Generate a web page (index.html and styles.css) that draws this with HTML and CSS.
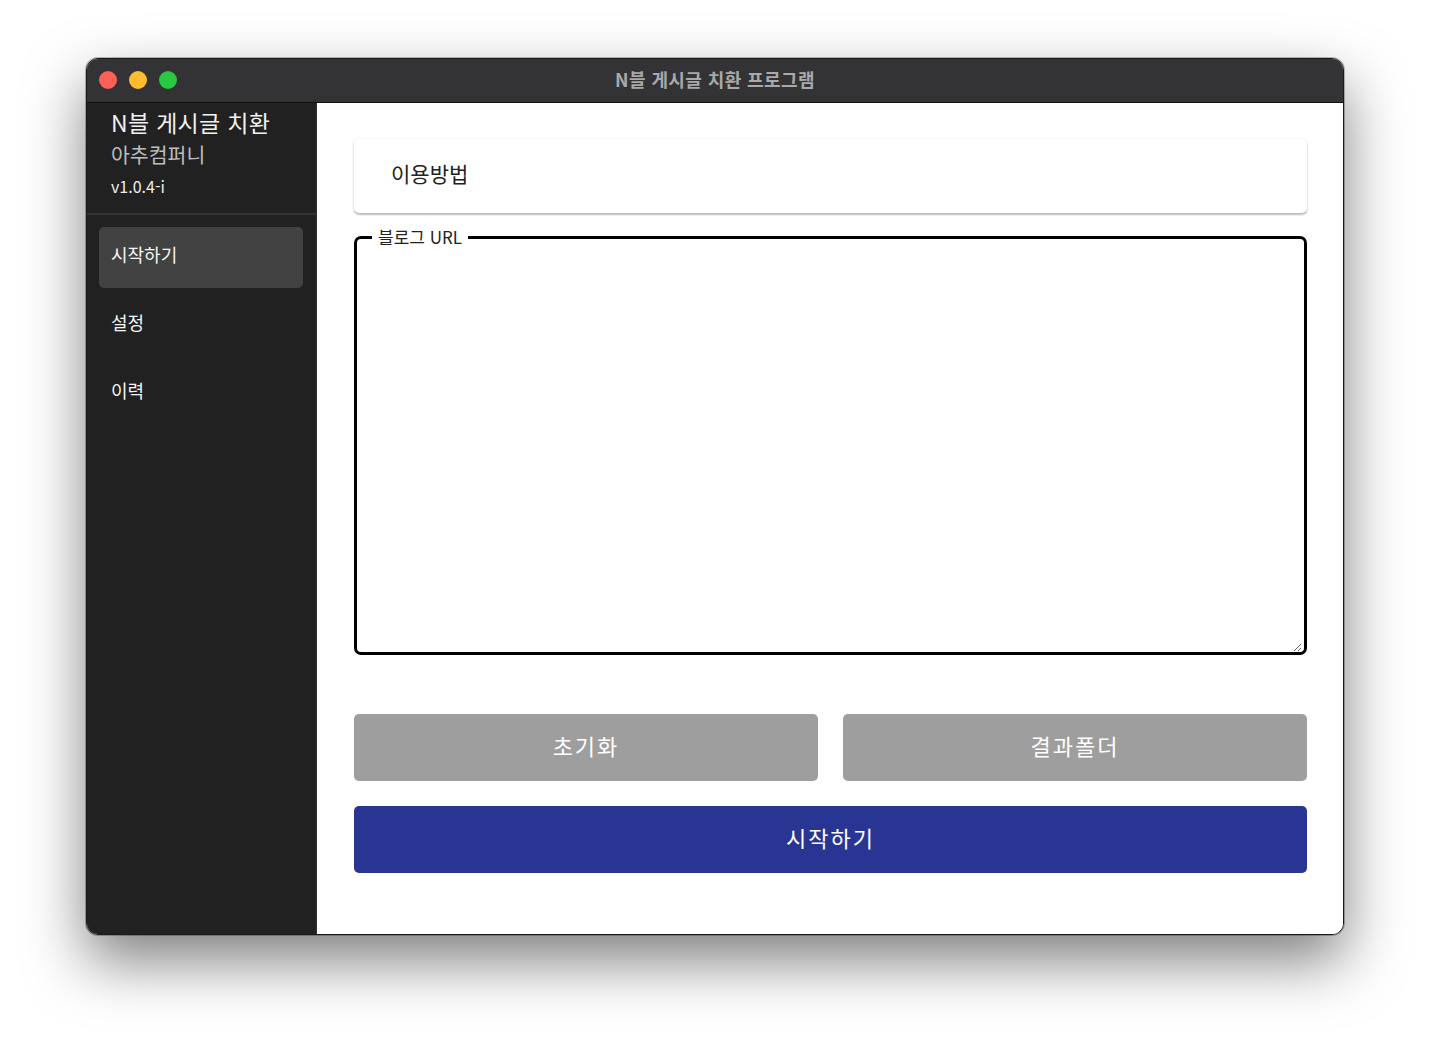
FILE: index.html
```html
<!DOCTYPE html>
<html lang="ko">
<head>
<meta charset="utf-8">
<title>N블 게시글 치환 프로그램</title>
<link rel="stylesheet" href="styles.css">
</head>
<body>
<div class="window">
  <div class="titlebar">
    <div class="lights">
      <span class="light red"></span>
      <span class="light yellow"></span>
      <span class="light green"></span>
    </div>
    <div class="title">N블 게시글 치환 프로그램</div>
  </div>
  <div class="body">
    <aside class="sidebar">
      <div class="brand">
        <div class="brand-title">N블 게시글 치환</div>
        <div class="brand-company">아추컴퍼니</div>
        <div class="brand-version">v1.0.4-i</div>
      </div>
      <nav class="nav">
        <div class="nav-item active">시작하기</div>
        <div class="nav-item">설정</div>
        <div class="nav-item">이력</div>
      </nav>
    </aside>
    <main class="main">
      <div class="card">이용방법</div>
      <fieldset class="url-field">
        <legend>블로그 URL</legend>
        <textarea class="url-input"></textarea>
      </fieldset>
      <div class="btn-row">
        <button class="btn gray">초기화</button>
        <button class="btn gray">결과폴더</button>
      </div>
      <button class="btn primary">시작하기</button>
    </main>
  </div>
</div>
</body>
</html>
```

FILE: styles.css
```css
* { box-sizing: border-box; }
html, body {
  margin: 0;
  padding: 0;
  background: #ffffff;
}
body {
  min-height: 100vh;
  padding: 58px 0 0 86px;
  font-family: "Noto Sans CJK KR", "Noto Sans", sans-serif;
}
.window {
  width: 1258px;
  height: 877px;
  border-radius: 12px;
  overflow: hidden;
  display: flex;
  flex-direction: column;
  border: 1px solid #1a1a1a;
  box-shadow: 0 26px 60px rgba(0,0,0,0.5), 0 0 0 1px rgba(0,0,0,0.25);
  background: #fff;
}
.titlebar {
  height: 44px;
  flex: none;
  background: #333335;
  border-bottom: 1px solid #111;
  display: flex;
  align-items: center;
  position: relative;
}
.lights {
  display: flex;
  gap: 12px;
  padding-left: 12px;
  margin-top: -2px;
}
.light {
  width: 18px;
  height: 18px;
  border-radius: 50%;
  display: block;
}
.red { background: #fe5f57; }
.yellow { background: #febc2e; }
.green { background: #28c840; }
.title {
  position: absolute;
  left: 0;
  right: 0;
  top: 0;
  bottom: 4px;
  display: flex;
  align-items: center;
  justify-content: center;
  color: #a9a9ab;
  font-weight: 700;
  font-size: 18px;
  letter-spacing: 0.4px;
  pointer-events: none;
}
.body {
  flex: 1;
  display: flex;
  min-height: 0;
}
.sidebar {
  width: 230px;
  flex: none;
  background: #212121;
  border-right: 1px solid #333;
  display: flex;
  flex-direction: column;
}
.brand {
  padding: 4px 0 12px 24px;
  border-bottom: 2px solid #333;
  color: #fff;
}
.brand-title {
  font-size: 23px;
  line-height: 30px;
  letter-spacing: 0.3px;
  color: #f2f2f2;
}
.brand-company {
  font-size: 20.5px;
  line-height: 30px;
  margin-top: 2px;
  color: #bdbdbd;
}
.brand-version {
  font-size: 16px;
  line-height: 30px;
  color: #eeeeee;
  margin-top: 2px;
}
.nav {
  padding: 12px 13px 0 12px;
  display: flex;
  flex-direction: column;
  gap: 7px;
}
.nav-item {
  height: 61px;
  border-radius: 5px;
  padding: 0 0 7px 12px;
  display: flex;
  align-items: center;
  color: #f5f5f5;
  font-size: 18px;
  font-weight: 400;
}
.nav-item.active {
  background: #424242;
}
.main {
  flex: 1;
  padding: 36px 36px 0 37px;
  display: flex;
  flex-direction: column;
  background: #fff;
}
.card {
  height: 74px;
  flex: none;
  border-radius: 5px;
  box-shadow: 0 2px 2px rgba(0,0,0,0.25), 0 0 3px rgba(0,0,0,0.08);
  padding: 0 0 6px 37px;
  display: flex;
  align-items: center;
  font-size: 21px;
  color: #222;
}
.url-field {
  margin: 17px 0 0 0;
  padding: 0 2px 2px 2px;
  border: 3px solid #000;
  border-radius: 7px;
  height: 425px;
  flex: none;
  display: block;
  position: relative;
}
.url-field legend {
  margin-left: 13px;
  padding: 0 6px;
  font-size: 17px;
  line-height: 14px;
  color: #222;
}
.url-input {
  display: block;
  width: 100%;
  height: 408px;
  border: none;
  outline: none;
  resize: vertical;
  font-family: inherit;
  background: transparent;
}
.btn-row {
  margin-top: 59px;
  display: flex;
  gap: 25px;
}
.btn {
  border: none;
  border-radius: 5px;
  height: 67px;
  padding: 0 0 6px 0;
  color: #fff;
  font-family: inherit;
  font-size: 22px;
  letter-spacing: 2px;
}
.btn.gray {
  flex: 1;
  background: #9e9e9e;
}
.btn.primary {
  margin-top: 25px;
  width: 100%;
  background: #283593;
}
```
